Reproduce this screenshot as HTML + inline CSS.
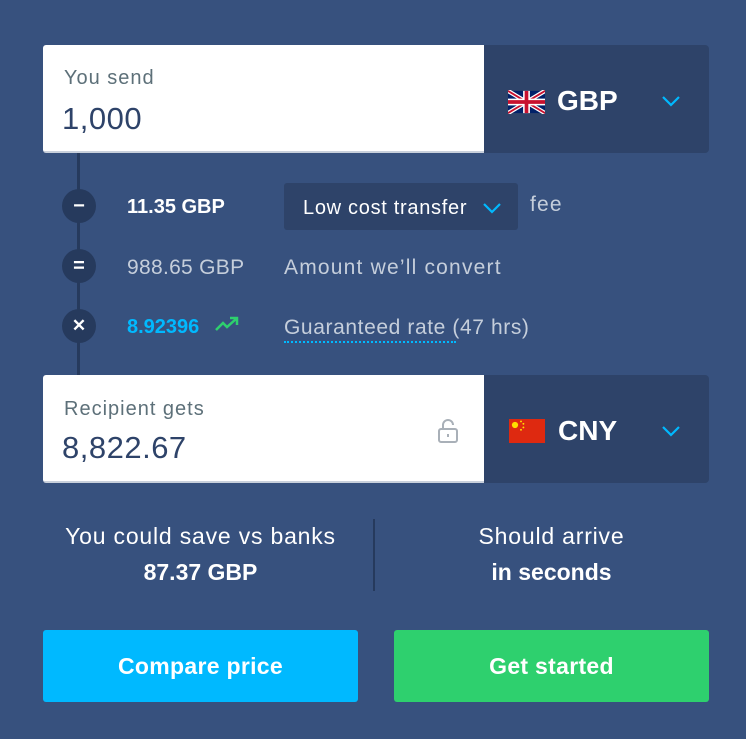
<!DOCTYPE html>
<html><head><meta charset="utf-8"><style>
body{margin:0;width:746px;height:739px;background:#37517e;font-family:"Liberation Sans",sans-serif;position:relative;overflow:hidden}
.a{position:absolute;white-space:nowrap}
.white{background:#fff;border-radius:3px 0 0 3px;border-bottom:2px solid #c9d0dc;box-sizing:border-box}
.dark{background:#2e4369;border-radius:0 4px 4px 0}
.lbl{color:#5d7079;font-size:20px;letter-spacing:1px}
.val{color:#2e4369;font-size:31px;letter-spacing:.5px}
.cur{color:#fff;font-size:28px;font-weight:bold}
.circ{width:34px;height:34px;border-radius:50%;background:#263a5d;color:#fff;text-align:center;line-height:34px;font-size:20px;font-weight:bold}
.t{color:#c5cedb;font-size:21px;letter-spacing:1.2px}
.btn{color:#fff;font-size:23px;font-weight:bold;text-align:center;line-height:72px;border-radius:3px;letter-spacing:.3px}
</style></head><body>
<div class="a white" style="left:43px;top:45px;width:441px;height:108px"></div>
<div class="a dark" style="left:484px;top:45px;width:225px;height:108px"></div>
<div class="a lbl" style="left:64px;top:67px">You send</div>
<div class="a val" style="left:62px;top:101px">1,000</div>
<svg class="a" style="left:508px;top:90px" width="37" height="24" viewBox="0 0 60 36"><rect width="60" height="36" fill="#012169"/><path d="M0 0L60 36M60 0L0 36" stroke="#fff" stroke-width="7"/><path d="M0 0L60 36M60 0L0 36" stroke="#c8102e" stroke-width="3"/><path d="M30 0V36M0 18H60" stroke="#fff" stroke-width="11"/><path d="M30 0V36M0 18H60" stroke="#c8102e" stroke-width="6"/></svg>
<div class="a cur" style="left:557px;top:85px">GBP</div>
<svg class="a" style="left:661px;top:94px" width="20" height="14"><path d="M2 3L10 11L18 3" stroke="#00b9ff" stroke-width="2.2" fill="none"/></svg>

<div class="a" style="left:77px;top:153px;width:3px;height:222px;background:#263a5d"></div>
<div class="a circ" style="left:62px;top:189px">−</div>
<div class="a circ" style="left:62px;top:249px">=</div>
<div class="a circ" style="left:62px;top:309px;font-size:17px">✕</div>
<div class="a" style="left:127px;top:196px;color:#fff;font-size:20px;font-weight:bold">11.35 GBP</div>
<div class="a" style="left:284px;top:183px;width:234px;height:47px;background:#2e4369;border-radius:3px"></div>
<div class="a" style="left:303px;top:197px;color:#fff;font-size:20px;letter-spacing:.7px">Low cost transfer</div>
<svg class="a" style="left:482px;top:201px" width="20" height="14"><path d="M2 3L10 11L18 3" stroke="#00b9ff" stroke-width="2.2" fill="none"/></svg>
<div class="a t" style="left:530px;top:193px">fee</div>
<div class="a t" style="left:127px;top:256px;letter-spacing:.3px">988.65 GBP</div>
<div class="a t" style="left:284px;top:256px">Amount we’ll convert</div>
<div class="a" style="left:127px;top:316px;color:#00b9ff;font-size:20px;font-weight:bold">8.92396</div>
<svg class="a" style="left:215px;top:316px" width="24" height="16"><path d="M1 14L8 7L12 11L21 3M15 2H22V9" stroke="#2ed06e" stroke-width="2.5" fill="none"/></svg>
<div class="a t" style="left:284px;top:316px;letter-spacing:.6px">Guaranteed rate (47 hrs)</div>
<div class="a" style="left:284px;top:341px;width:172px;border-top:2px dotted #00b9ff"></div>

<div class="a white" style="left:43px;top:375px;width:441px;height:108px"></div>
<div class="a dark" style="left:484px;top:375px;width:225px;height:108px"></div>
<div class="a lbl" style="left:64px;top:398px">Recipient gets</div>
<div class="a val" style="left:62px;top:430px">8,822.67</div>
<svg class="a" style="left:436px;top:418px" width="24" height="26"><path d="M7 11V7a5 5 0 0 1 10 0" stroke="#a9b0b8" stroke-width="2" fill="none"/><rect x="3" y="11" width="18" height="13" rx="2" stroke="#a9b0b8" stroke-width="2" fill="none"/><rect x="11" y="16" width="2" height="3" fill="#a9b0b8"/></svg>
<svg class="a" style="left:509px;top:419px" width="36" height="24" viewBox="0 0 30 20"><rect width="30" height="20" fill="#de2910"/><circle cx="5" cy="5" r="2.6" fill="#ffde00"/><circle cx="10" cy="2" r=".8" fill="#ffde00"/><circle cx="12" cy="4" r=".8" fill="#ffde00"/><circle cx="12" cy="7" r=".8" fill="#ffde00"/><circle cx="10" cy="9" r=".8" fill="#ffde00"/></svg>
<div class="a cur" style="left:558px;top:415px">CNY</div>
<svg class="a" style="left:661px;top:424px" width="20" height="14"><path d="M2 3L10 11L18 3" stroke="#00b9ff" stroke-width="2.2" fill="none"/></svg>

<div class="a" style="left:43px;top:523px;width:315px;text-align:center;color:#fff;font-size:23px;letter-spacing:.8px">You could save vs banks</div>
<div class="a" style="left:43px;top:559px;width:315px;text-align:center;color:#fff;font-size:23px;font-weight:bold">87.37 GBP</div>
<div class="a" style="left:373px;top:519px;width:2px;height:72px;background:#263a5d"></div>
<div class="a" style="left:394px;top:523px;width:315px;text-align:center;color:#fff;font-size:23px;letter-spacing:.8px">Should arrive</div>
<div class="a" style="left:394px;top:559px;width:315px;text-align:center;color:#fff;font-size:23px;font-weight:bold">in seconds</div>

<div class="a btn" style="left:43px;top:630px;width:315px;height:72px;background:#00b9ff">Compare price</div>
<div class="a btn" style="left:394px;top:630px;width:315px;height:72px;background:#2ed06e">Get started</div>
</body></html>
